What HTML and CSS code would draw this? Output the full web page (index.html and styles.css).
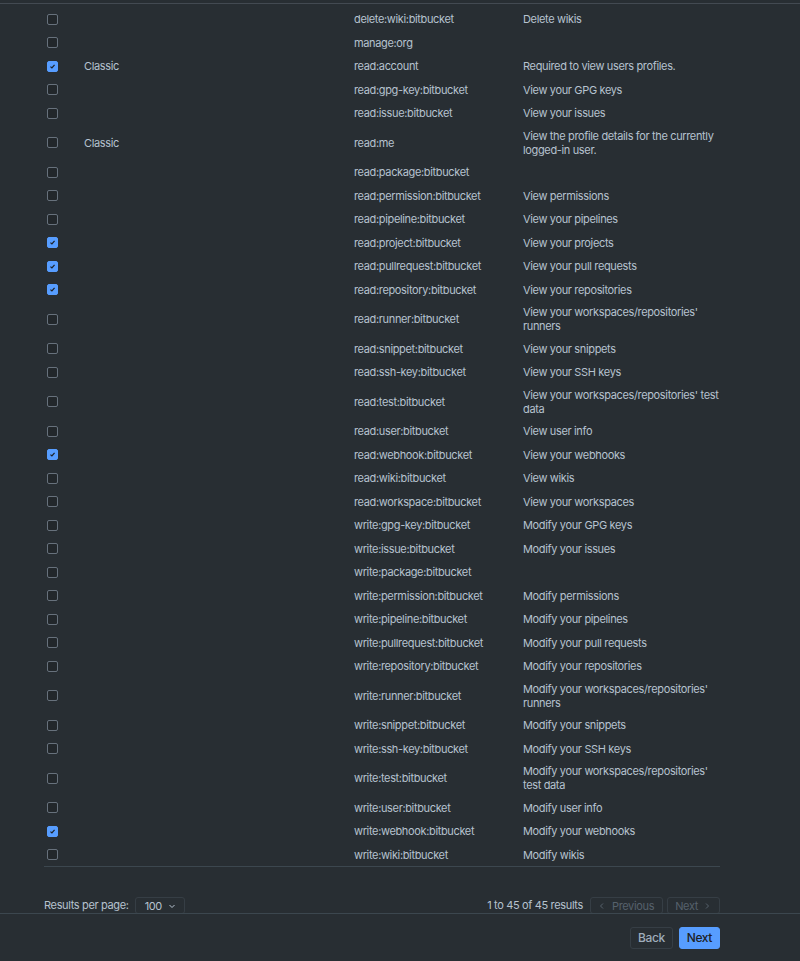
FILE: index.html
```html
<!DOCTYPE html>
<html lang="en">
<head>
    <meta charset="UTF-8">
    <meta name="viewport" content="width=device-width, initial-scale=1.0">
    <title>Configure scopes</title>
    <link rel="stylesheet" href="styles.css">
</head>
<body>
    <div class="modal">
        <div class="modal-top"></div>
        <div class="modal-body">
            <div class="scopes">
                <div class="scope-row"><span class="checkbox"></span><span class="type"></span><span class="name">delete:wiki:bitbucket</span><span class="desc">Delete wikis</span></div>
                <div class="scope-row"><span class="checkbox"></span><span class="type"></span><span class="name">manage:org</span><span class="desc"></span></div>
                <div class="scope-row"><span class="checkbox is-checked"><svg viewBox="0 0 11 11"><path d="M3 5.6l1.8 1.7L8 3.6"/></svg></span><span class="type">Classic</span><span class="name">read:account</span><span class="desc">Required to view users profiles.</span></div>
                <div class="scope-row"><span class="checkbox"></span><span class="type"></span><span class="name">read:gpg-key:bitbucket</span><span class="desc">View your GPG keys</span></div>
                <div class="scope-row"><span class="checkbox"></span><span class="type"></span><span class="name">read:issue:bitbucket</span><span class="desc">View your issues</span></div>
                <div class="scope-row"><span class="checkbox"></span><span class="type">Classic</span><span class="name">read:me</span><span class="desc">View the profile details for the currently logged-in user.</span></div>
                <div class="scope-row"><span class="checkbox"></span><span class="type"></span><span class="name">read:package:bitbucket</span><span class="desc"></span></div>
                <div class="scope-row"><span class="checkbox"></span><span class="type"></span><span class="name">read:permission:bitbucket</span><span class="desc">View permissions</span></div>
                <div class="scope-row"><span class="checkbox"></span><span class="type"></span><span class="name">read:pipeline:bitbucket</span><span class="desc">View your pipelines</span></div>
                <div class="scope-row"><span class="checkbox is-checked"><svg viewBox="0 0 11 11"><path d="M3 5.6l1.8 1.7L8 3.6"/></svg></span><span class="type"></span><span class="name">read:project:bitbucket</span><span class="desc">View your projects</span></div>
                <div class="scope-row"><span class="checkbox is-checked"><svg viewBox="0 0 11 11"><path d="M3 5.6l1.8 1.7L8 3.6"/></svg></span><span class="type"></span><span class="name">read:pullrequest:bitbucket</span><span class="desc">View your pull requests</span></div>
                <div class="scope-row"><span class="checkbox is-checked"><svg viewBox="0 0 11 11"><path d="M3 5.6l1.8 1.7L8 3.6"/></svg></span><span class="type"></span><span class="name">read:repository:bitbucket</span><span class="desc">View your repositories</span></div>
                <div class="scope-row"><span class="checkbox"></span><span class="type"></span><span class="name">read:runner:bitbucket</span><span class="desc">View your workspaces/repositories' runners</span></div>
                <div class="scope-row"><span class="checkbox"></span><span class="type"></span><span class="name">read:snippet:bitbucket</span><span class="desc">View your snippets</span></div>
                <div class="scope-row"><span class="checkbox"></span><span class="type"></span><span class="name">read:ssh-key:bitbucket</span><span class="desc">View your SSH keys</span></div>
                <div class="scope-row"><span class="checkbox"></span><span class="type"></span><span class="name">read:test:bitbucket</span><span class="desc">View your workspaces/repositories' test data</span></div>
                <div class="scope-row"><span class="checkbox"></span><span class="type"></span><span class="name">read:user:bitbucket</span><span class="desc">View user info</span></div>
                <div class="scope-row"><span class="checkbox is-checked"><svg viewBox="0 0 11 11"><path d="M3 5.6l1.8 1.7L8 3.6"/></svg></span><span class="type"></span><span class="name">read:webhook:bitbucket</span><span class="desc">View your webhooks</span></div>
                <div class="scope-row"><span class="checkbox"></span><span class="type"></span><span class="name">read:wiki:bitbucket</span><span class="desc">View wikis</span></div>
                <div class="scope-row"><span class="checkbox"></span><span class="type"></span><span class="name">read:workspace:bitbucket</span><span class="desc">View your workspaces</span></div>
                <div class="scope-row"><span class="checkbox"></span><span class="type"></span><span class="name">write:gpg-key:bitbucket</span><span class="desc">Modify your GPG keys</span></div>
                <div class="scope-row"><span class="checkbox"></span><span class="type"></span><span class="name">write:issue:bitbucket</span><span class="desc">Modify your issues</span></div>
                <div class="scope-row"><span class="checkbox"></span><span class="type"></span><span class="name">write:package:bitbucket</span><span class="desc"></span></div>
                <div class="scope-row"><span class="checkbox"></span><span class="type"></span><span class="name">write:permission:bitbucket</span><span class="desc">Modify permissions</span></div>
                <div class="scope-row"><span class="checkbox"></span><span class="type"></span><span class="name">write:pipeline:bitbucket</span><span class="desc">Modify your pipelines</span></div>
                <div class="scope-row"><span class="checkbox"></span><span class="type"></span><span class="name">write:pullrequest:bitbucket</span><span class="desc">Modify your pull requests</span></div>
                <div class="scope-row"><span class="checkbox"></span><span class="type"></span><span class="name">write:repository:bitbucket</span><span class="desc">Modify your repositories</span></div>
                <div class="scope-row"><span class="checkbox"></span><span class="type"></span><span class="name">write:runner:bitbucket</span><span class="desc">Modify your workspaces/repositories' runners</span></div>
                <div class="scope-row"><span class="checkbox"></span><span class="type"></span><span class="name">write:snippet:bitbucket</span><span class="desc">Modify your snippets</span></div>
                <div class="scope-row"><span class="checkbox"></span><span class="type"></span><span class="name">write:ssh-key:bitbucket</span><span class="desc">Modify your SSH keys</span></div>
                <div class="scope-row"><span class="checkbox"></span><span class="type"></span><span class="name">write:test:bitbucket</span><span class="desc">Modify your workspaces/repositories' test data</span></div>
                <div class="scope-row"><span class="checkbox"></span><span class="type"></span><span class="name">write:user:bitbucket</span><span class="desc">Modify user info</span></div>
                <div class="scope-row"><span class="checkbox is-checked"><svg viewBox="0 0 11 11"><path d="M3 5.6l1.8 1.7L8 3.6"/></svg></span><span class="type"></span><span class="name">write:webhook:bitbucket</span><span class="desc">Modify your webhooks</span></div>
                <div class="scope-row"><span class="checkbox"></span><span class="type"></span><span class="name">write:wiki:bitbucket</span><span class="desc">Modify wikis</span></div>
            </div>
            <div class="pager">
                <div class="pager-left">
                    <span class="pager-label">Results per page:</span>
                    <span class="pager-box page-size">100<svg viewBox="0 0 8 8"><path d="M1.5 3l2.5 2.5L6.5 3"/></svg></span>
                </div>
                <div class="pager-right">
                    <span class="pager-label pager-count">1 to 45 of 45 results</span>
                    <span class="pager-box is-disabled prev"><svg viewBox="0 0 8 8"><path d="M5 1.5L2.5 4L5 6.5"/></svg>Previous</span>
                    <span class="pager-box is-disabled next">Next<svg viewBox="0 0 8 8"><path d="M3 1.5L5.5 4L3 6.5"/></svg></span>
                </div>
            </div>
        </div>
        <div class="modal-footer">
            <button class="btn btn-subtle">Back</button>
            <button class="btn btn-primary">Next</button>
        </div>
    </div>
</body>
</html>
```

FILE: styles.css
```css
body {
    margin: 0;
    background-color: #282e33;
    color: #b6c2cf;
    font-family: 'Inter', 'Noto Sans', sans-serif;
    font-size: 11px;
    letter-spacing: -0.35px;
    overflow: hidden;
}

.modal {
    display: flex;
    flex-direction: column;
    height: 961px;
}

.modal-top {
    height: 3px;
    border-bottom: 1px solid #434a52;
}

.modal-body {
    flex: 1;
    overflow: hidden;
    padding: 3.25px 80px 0 44px;
}

.scopes {
    border-bottom: 1px solid #3c474f;
}

.scope-row {
    display: grid;
    grid-template-columns: 32px 270px 169px 1fr;
    align-items: center;
    min-height: 16px;
    padding: 3.75px 0;
    line-height: 14px;
}

.checkbox {
    box-sizing: border-box;
    width: 11px;
    height: 11px;
    margin-left: 3px;
    border: 1px solid #67717c;
    border-radius: 2px;
    background-color: #22272b;
}

.checkbox svg {
    display: block;
    width: 100%;
    height: 100%;
    fill: none;
    stroke: #1d2125;
    stroke-width: 1.5;
}

.checkbox.is-checked {
    border-color: #579dff;
    background-color: #579dff;
}

.type,
.name,
.desc {
    padding-left: 8px;
}

.pager {
    display: flex;
    justify-content: space-between;
    margin-top: 30px;
}

.pager-left,
.pager-right {
    display: flex;
    align-items: flex-start;
}

.pager-left {
    gap: 6px;
}

.pager-label {
    line-height: 16px;
}

.pager-right {
    gap: 4px;
}

.pager-count {
    margin-right: 3px;
}

.pager-box {
    box-sizing: border-box;
    display: flex;
    align-items: center;
    gap: 6px;
    height: 17px;
    padding: 0 8px 0 9px;
    border: 1px solid #363e45;
    border-radius: 3px;
}

.pager-box svg {
    width: 8px;
    height: 8px;
    fill: none;
    stroke: currentColor;
    stroke-width: 1;
}

.pager-box.is-disabled {
    color: #56616c;
}

.pager-box.prev {
    gap: 6px;
    padding: 0 8px 0 7px;
}

.pager-box.next {
    gap: 5px;
    padding: 0 8px 0 7px;
}

.modal-footer {
    display: flex;
    justify-content: flex-end;
    align-items: center;
    gap: 6px;
    height: 47px;
    padding-right: 80px;
    border-top: 1px solid #3c474f;
}

.btn {
    height: 22px;
    padding: 0 7px;
    border-radius: 3px;
    font-family: inherit;
    font-size: 12px;
    font-weight: 500;
    letter-spacing: -0.4px;
    cursor: pointer;
}

.btn-subtle {
    background-color: transparent;
    border: 1px solid #363e45;
    color: #9fadbc;
}

.btn-primary {
    background-color: #579dff;
    border: 1px solid #579dff;
    color: #1d2125;
}
```
